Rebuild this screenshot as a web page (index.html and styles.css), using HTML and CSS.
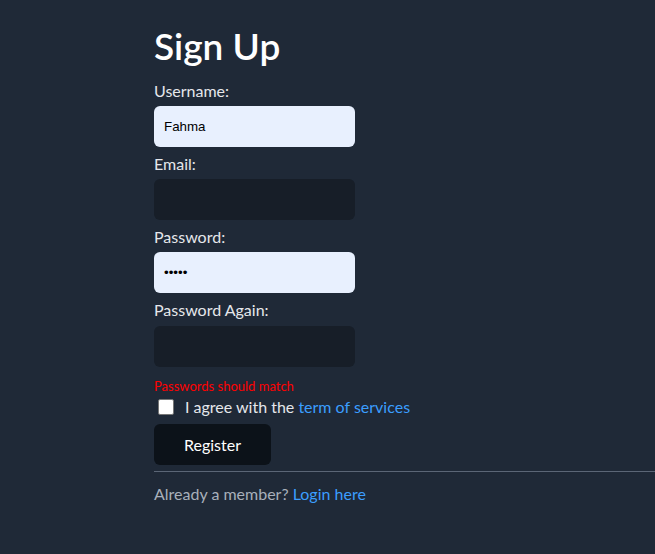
FILE: index.html
```html
<!DOCTYPE html>
<html>
<head>
<meta charset="utf-8">
<link rel="stylesheet" href="styles.css">
</head>
<body>
<div class="page">
  <form class="signup">
    <h1 class="title">Sign Up</h1>
    <label class="label">Username:</label>
    <input class="field filled" type="text" value="Fahma">
    <label class="label">Email:</label>
    <input class="field" type="text">
    <label class="label">Password:</label>
    <input class="field filled" type="password" value="12345">
    <label class="label">Password Again:</label>
    <input class="field last" type="password">
    <div class="error">Passwords should match</div>
    <div class="agree">
      <span class="box"></span>
      <span>I agree with the <a class="link">term of services</a></span>
    </div>
    <button class="btn" type="button">Register</button>
    <div class="rule"></div>
    <p class="member">Already a member? <a class="link">Login here</a></p>
  </form>
</div>
</body>
</html>
```
FILE: styles.css
```css
html, body {
  margin: 0;
  padding: 0;
  height: 100%;
  background: #1f2937;
}
.page {
  padding: 22px 0 0 154px;
  font-family: "Lato", "Noto Sans", sans-serif;
  color: #e5e7eb;
}
.signup {
  display: flex;
  flex-direction: column;
  align-items: flex-start;
}
.title {
  margin: 0 0 9px 0;
  font-size: 37px;
  line-height: 48px;
  font-weight: 600;
  color: #ffffff;
}
.label {
  font-size: 16px;
  line-height: 24px;
  margin-bottom: 3px;
  color: #e5e7eb;
}
.field {
  box-sizing: border-box;
  width: 201px;
  height: 41px;
  margin: 0 0 5px 0;
  border: none;
  border-radius: 6px;
  background: #171e28;
  padding: 0 10px;
  font-family: "Liberation Sans", Arial, sans-serif;
  font-size: 13.33px;
  color: #000;
  outline: none;
}
.field.filled {
  background: #e8f0fe;
}
.field.last {
  margin-top: 1px;
}
.error {
  margin-top: 6px;
  font-size: 13px;
  line-height: 17px;
  color: #ff0000;
}
.agree {
  display: flex;
  align-items: center;
  gap: 11px;
  font-size: 16px;
  line-height: 24px;
  margin: 0 0 5px 4px;
}
.box {
  width: 14px;
  height: 14px;
  background: #fff;
  border: 1px solid #767676;
  border-radius: 2px;
}
.link {
  color: #3b9eff;
  text-decoration: none;
}
.btn {
  width: 117px;
  height: 41px;
  border: none;
  border-radius: 6px;
  background: #0c1219;
  color: #ffffff;
  font-family: "Lato", "Noto Sans", sans-serif;
  font-size: 16px;
}
.rule {
  align-self: stretch;
  height: 1px;
  margin-top: 6px;
  background: #5b6676;
}
.member {
  margin: 11px 0 0 0;
  font-size: 16px;
  line-height: 22px;
  color: #a8b0bb;
}
```
